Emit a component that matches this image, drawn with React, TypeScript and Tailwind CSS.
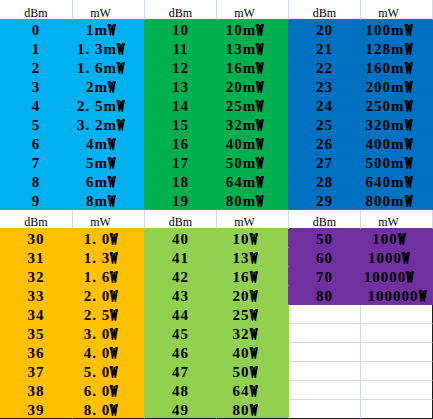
import React from "react";

type Fill = "blue" | "green" | "dblue" | "orange" | "lgreen" | "purple" | "white";

const FILL: Record<Fill, { bg: string; r: string; b: string }> = {
  blue: { bg: "bg-[#00b0f0]", r: "border-r-[#00b0f0]", b: "border-b-[#00b0f0]" },
  green: { bg: "bg-[#00b050]", r: "border-r-[#00b050]", b: "border-b-[#00b050]" },
  dblue: { bg: "bg-[#0070c0]", r: "border-r-[#0070c0]", b: "border-b-[#0070c0]" },
  orange: { bg: "bg-[#ffc000]", r: "border-r-[#ffc000]", b: "border-b-[#ffc000]" },
  lgreen: { bg: "bg-[#92d050]", r: "border-r-[#92d050]", b: "border-b-[#92d050]" },
  purple: { bg: "bg-[#7030a0]", r: "border-r-[#7030a0]", b: "border-b-[#7030a0]" },
  white: { bg: "bg-white", r: "border-r-[#d0d7e5]", b: "border-b-[#d0d7e5]" },
};
const GRID = { r: "border-r-[#d0d7e5]", b: "border-b-[#d0d7e5]" };
const DARK = { r: "border-r-[#1a1a1a]", b: "border-b-[#1a1a1a]" };

type Kind = "hdr-dbm" | "hdr-mw" | "dbm" | "mw" | "empty";
type Cell = { kind: Kind; text: string; fill: Fill; wide?: boolean };

const top = {
  blue: [
    ["0", "1mW"], ["1", "1. 3mW"], ["2", "1. 6mW"], ["3", "2mW"], ["4", "2. 5mW"],
    ["5", "3. 2mW"], ["6", "4mW"], ["7", "5mW"], ["8", "6mW"], ["9", "8mW"],
  ],
  green: [
    ["10", "10mW"], ["11", "13mW"], ["12", "16mW"], ["13", "20mW"], ["14", "25mW"],
    ["15", "32mW"], ["16", "40mW"], ["17", "50mW"], ["18", "64mW"], ["19", "80mW"],
  ],
  dblue: [
    ["20", "100mW"], ["21", "128mW"], ["22", "160mW"], ["23", "200mW"], ["24", "250mW"],
    ["25", "320mW"], ["26", "400mW"], ["27", "500mW"], ["28", "640mW"], ["29", "800mW"],
  ],
};
const bottom = {
  orange: [
    ["30", "1. 0W"], ["31", "1. 3W"], ["32", "1. 6W"], ["33", "2. 0W"], ["34", "2. 5W"],
    ["35", "3. 0W"], ["36", "4. 0W"], ["37", "5. 0W"], ["38", "6. 0W"], ["39", "8. 0W"],
  ],
  lgreen: [
    ["40", "10W"], ["41", "13W"], ["42", "16W"], ["43", "20W"], ["44", "25W"],
    ["45", "32W"], ["46", "40W"], ["47", "50W"], ["48", "64W"], ["49", "80W"],
  ],
  purple: [["50", "100W"], ["60", "1000W"], ["70", "10000W"], ["80", "100000W"]],
};

function buildRows(): Cell[][] {
  const rows: Cell[][] = [];
  const hdr = (): Cell[] => {
    const r: Cell[] = [];
    for (let i = 0; i < 3; i++) {
      r.push({ kind: "hdr-dbm", text: "dBm", fill: "white" });
      r.push({ kind: "hdr-mw", text: "mW", fill: "white" });
    }
    return r;
  };
  rows.push(hdr());
  for (let i = 0; i < 10; i++) {
    const r: Cell[] = [];
    (["blue", "green", "dblue"] as const).forEach((k) => {
      const [a, b] = top[k][i];
      r.push({ kind: "dbm", text: a, fill: k });
      r.push({ kind: "mw", text: b, fill: k });
    });
    rows.push(r);
  }
  rows.push(hdr());
  for (let i = 0; i < 10; i++) {
    const r: Cell[] = [];
    (["orange", "lgreen"] as const).forEach((k) => {
      const [a, b] = bottom[k][i];
      r.push({ kind: "dbm", text: a, fill: k });
      r.push({ kind: "mw", text: b, fill: k });
    });
    if (i < 4) {
      const [a, b] = bottom.purple[i];
      r.push({ kind: "dbm", text: a, fill: "purple" });
      r.push({ kind: "mw", text: b, fill: "purple", wide: i === 3 });
    } else {
      r.push({ kind: "empty", text: "", fill: "white" });
      r.push({ kind: "empty", text: "", fill: "white" });
    }
    rows.push(r);
  }
  return rows;
}

function Value({ text }: { text: string }) {
  const hasW = text.endsWith("W");
  const body = hasW ? text.slice(0, -1) : text;
  return (
    <span className="whitespace-pre">
      {body}
      {hasW && (
        <span className="inline-block w-[7px] tracking-normal">
          <span className="inline-block origin-left scale-x-[0.5] [-webkit-text-stroke:1.8px_black]">W</span>
        </span>
      )}
    </span>
  );
}

export default function App() {
  const rows = buildRows();
  const nR = rows.length;
  return (
    <div className="w-[433px] h-[419px] overflow-hidden bg-white">
      <div className="grid grid-cols-[73px_repeat(5,72px)] w-[433px]">
        {rows.map((row, ri) =>
          row.map((c, ci) => {
            const self = c.fill !== "white" ? c.fill : null;
            const rightN = ci < 5 ? row[ci + 1] : null;
            const belowN = ri < nR - 1 ? rows[ri + 1][ci] : null;
            let rc: string;
            if (rightN && rightN.fill !== "white") rc = FILL[rightN.fill].r;
            else if (self) rc = FILL[self].r;
            else if (ci === 5 && ri >= 16) rc = DARK.r;
            else rc = GRID.r;
            let bc: string;
            if (ri === nR - 1) bc = DARK.b;
            else if (belowN && belowN.fill !== "white") bc = FILL[belowN.fill].b;
            else if (self) bc = FILL[self].b;
            else bc = GRID.b;
            const h = ri === 0 ? "h-[20px]" : "h-[19px]";
            const isHdr = c.kind === "hdr-dbm" || c.kind === "hdr-mw";
            const isMw = c.kind === "hdr-mw" || (c.kind === "mw" && !c.wide);
            return (
              <div
                key={`${ri}-${ci}`}
                className={`box-border border-r border-b ${rc} ${bc} ${FILL[c.fill].bg} ${h} flex items-end justify-center whitespace-nowrap text-black font-['Liberation_Serif',serif] ${
                  isMw ? "pr-[16px]" : ""
                } ${isHdr ? "text-[12px] leading-[12px]" : "text-[15px] leading-[15px] font-bold tracking-[1px]"}`}
              >
                {isHdr ? c.text : c.kind === "empty" ? null : <Value text={c.text} />}
              </div>
            );
          })
        )}
      </div>
    </div>
  );
}
